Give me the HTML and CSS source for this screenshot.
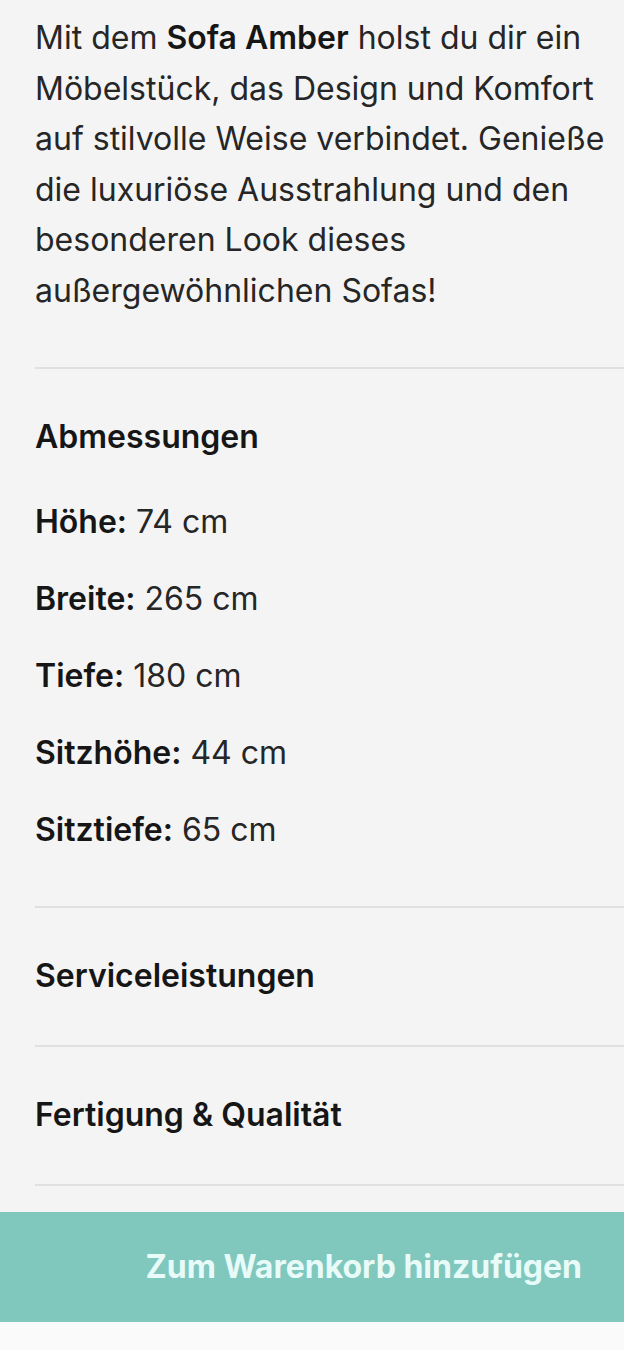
FILE: index.html
```html
<!DOCTYPE html>
<html lang="de">
<head>
  <meta charset="UTF-8">
  <meta name="viewport" content="width=device-width, initial-scale=1.0">
  <title>Sofa Amber</title>
  <link rel="stylesheet" href="styles.css">
</head>
<body>
  <div class="product-info">
    <p class="product-desc">
      Mit dem <strong>Sofa Amber</strong> holst du dir ein Möbelstück, das Design und Komfort auf stilvolle Weise verbindet. Genieße die luxuriöse Ausstrahlung und den besonderen Look dieses außergewöhnlichen Sofas!
    </p>

    <div class="info-section">
      <h3 class="section-title">Abmessungen</h3>
      <ul class="spec-list">
        <li><strong>Höhe:</strong> 74 cm</li>
        <li><strong>Breite:</strong> 265 cm</li>
        <li><strong>Tiefe:</strong> 180 cm</li>
        <li><strong>Sitzhöhe:</strong> 44 cm</li>
        <li><strong>Sitztiefe:</strong> 65 cm</li>
      </ul>
    </div>

    <div class="info-section collapsed">
      <h3 class="section-title">Serviceleistungen</h3>
    </div>

    <div class="info-section collapsed">
      <h3 class="section-title">Fertigung &amp; Qualität</h3>
    </div>
  </div>

  <div class="cart-bar">
    <button class="cart-btn">Zum Warenkorb hinzufügen</button>
  </div>
</body>
</html>
```

FILE: styles.css
```css
body {
  margin: 0;
  padding: 0;
  font-family: Inter, "Noto Sans", "Liberation Sans", sans-serif;
  background-color: #f4f4f4;
  color: #1f1f1f;
}

.product-info {
  padding: 13px 0 0 35px;
}

.product-desc {
  margin: 0;
  font-size: 32px;
  line-height: 50.6px;
  color: #262626;
}

.product-desc strong {
  font-weight: 600;
  color: #161616;
}

.info-section {
  margin-top: 50px;
  border-top: 2px solid #e0e0e0;
  padding: 48px 0 56px;
}

.info-section.collapsed {
  margin-top: 0;
  padding: 48px 0 49px;
}

.info-section.collapsed:last-child {
  border-bottom: 2px solid #e0e0e0;
}

.section-title {
  margin: 0;
  font-size: 32px;
  font-weight: 600;
  line-height: 40px;
  color: #161616;
}

.spec-list {
  list-style: none;
  margin: 45px 0 0;
  padding: 0;
  display: flex;
  flex-direction: column;
  gap: 37px;
}

.spec-list li {
  font-size: 32px;
  line-height: 40px;
  color: #262626;
}

.spec-list strong {
  font-weight: 600;
  color: #161616;
}

.cart-bar {
  margin-top: 26px;
  background-color: #fafafa;
  padding-bottom: 30px;
}

.cart-btn {
  display: block;
  width: 100%;
  height: 110px;
  padding: 0 42px 0 0;
  border: none;
  background-color: #80c8be;
  color: #e9fbf9;
  font-family: inherit;
  font-size: 32px;
  font-weight: 700;
  text-align: right;
  cursor: pointer;
}
```
